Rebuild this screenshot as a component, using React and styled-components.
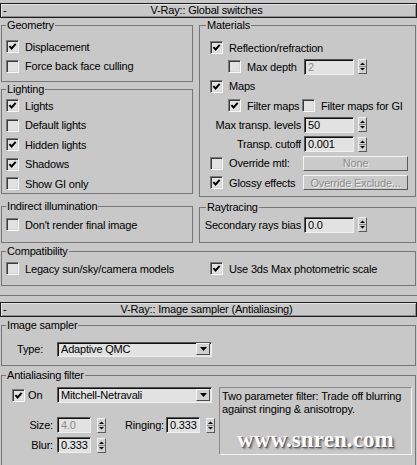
import React from "react"
import styled, { createGlobalStyle } from "styled-components"

const GlobalStyle = createGlobalStyle`
  html, body {
    margin: 0;
    padding: 0;
    background: #c8c8c8;
  }
  body {
    font-family: "Liberation Sans", Arial, sans-serif;
    font-size: 11px;
    letter-spacing: -0.18px;
    color: #000;
  }
`

const Panel = styled.div`
  width: 417px;
  height: 465px;
  overflow: hidden;
  background: #c8c8c8;
  padding-top: 3px;
  box-sizing: border-box;
`

const RolloutHeader = styled.div`
  height: 15px;
  box-sizing: border-box;
  border: 1px solid #1e1e1e;
  box-shadow: inset 1px 1px 0 #e4e4e4, inset -1px -1px 0 #8e8e8e;
  display: grid;
  grid-template-columns: 14px 1fr 18px;
  align-items: center;
  line-height: 13px;
`

const Minus = styled.span`
  padding-left: 2px;
`

const Title = styled.span`
  text-align: center;
  white-space: nowrap;
`

const Columns = styled.div`
  display: flex;
  gap: 6px;
  padding: 0 1px;
  margin-top: 1px;
`

const Column = styled.div`
  display: flex;
  flex-direction: column;
  width: ${p => p.$w}px;
`

const Wide = styled.div`
  padding: 0 1px;
  margin-top: ${p => p.$mt || 0}px;
`

const Group = styled.fieldset`
  margin: ${p => p.$mt || 0}px 0 0;
  padding: 0;
  border: 1px solid #767676;
  height: ${p => p.$h}px;
  box-sizing: border-box;
  min-width: 0;
`

const Legend = styled.legend`
  padding: 0 1px;
  margin-left: ${p => p.$ml ?? 4}px;
  line-height: 12px;
  font-size: 11px;
  white-space: nowrap;
`

const Content = styled.div`
  padding-top: ${p => p.$pt || 0}px;
  padding-left: ${p => p.$pl || 0}px;
  display: flex;
  flex-direction: ${p => (p.$row ? "row" : "column")};
`

const Row = styled.div`
  display: flex;
  align-items: center;
  height: ${p => p.$h || 19.5}px;
  padding-left: ${p => p.$indent || 0}px;
  margin-top: ${p => p.$mt || 0}px;
  white-space: nowrap;
`

const Cell = styled.div`
  display: flex;
  align-items: center;
  justify-content: ${p => (p.$right ? "flex-end" : "flex-start")};
  width: ${p => p.$w}px;
  flex: none;
  box-sizing: border-box;
  padding-left: ${p => p.$pl || 0}px;
  padding-right: ${p => p.$pr || 0}px;
  white-space: nowrap;
`

const Box = styled.span`
  width: 13px;
  height: 13px;
  flex: none;
  box-sizing: border-box;
  border: 1px solid;
  border-color: #7a7a7a #fafafa #fafafa #7a7a7a;
  box-shadow: inset 1px 1px 0 #3a3a3a, inset -1px -1px 0 #d6d6d6;
  background: #e2e2e2;
  display: flex;
  align-items: center;
  justify-content: center;
  margin-right: ${p => p.$gap ?? 6}px;
`

const Tick = () => (
  <svg width="9" height="9" viewBox="0 0 9 9">
    <path d="M1.4 4.1 L3.6 6.5 L7.7 1.9" fill="none" stroke="#000" strokeWidth="1.9" />
  </svg>
)

const Check = ({ on, gap, children }) => (
  <>
    <Box $gap={gap}>{on && <Tick />}</Box>
    {children}
  </>
)

const Field = styled.div`
  width: ${p => p.$w || 50}px;
  height: 16px;
  flex: none;
  box-sizing: border-box;
  border: 1px solid;
  border-color: #555 #efefef #efefef #555;
  box-shadow: inset 1px 1px 0 #111;
  background: #e2e2e2;
  color: ${p => (p.$off ? "#8c8c8c" : "#000")};
  padding-left: 3px;
  line-height: 14px;
`

const SpinBox = styled.div`
  width: 9px;
  height: 15px;
  flex: none;
  margin-left: ${p => p.$ml ?? 4}px;
  box-sizing: border-box;
  border: 1px solid;
  border-color: #f2f2f2 #5c5c5c #5c5c5c #f2f2f2;
  background: #d2d2d2;
  display: flex;
`

const Spinner = ({ ml }) => (
  <SpinBox $ml={ml}>
    <svg width="7" height="13" viewBox="0 0 7 13">
      <path d="M1 5 L3.5 2.5 L6 5 Z" fill="#000" />
      <path d="M0 6.5 H7" stroke="#8a8a8a" strokeWidth="1" />
      <path d="M1 8 L3.5 10.5 L6 8 Z" fill="#000" />
    </svg>
  </SpinBox>
)

const Button = styled.div`
  width: 105px;
  height: 15px;
  flex: none;
  box-sizing: border-box;
  border: 1px solid;
  border-color: #f4f4f4 #5a5a5a #5a5a5a #f4f4f4;
  background: #cacaca;
  color: #8c8c8c;
  text-shadow: 1px 1px 0 #eeeeee;
  display: flex;
  align-items: center;
  justify-content: center;
`

const Select = styled.div`
  width: ${p => p.$w}px;
  height: ${p => p.$h || 16}px;
  flex: none;
  box-sizing: border-box;
  border: 1px solid;
  border-color: #555 #efefef #efefef #555;
  box-shadow: inset 1px 1px 0 #111;
  background: #e2e2e2;
  display: flex;
  align-items: center;
  padding-left: 3px;
`

const SelectText = styled.span`
  flex: 1;
`

const SelectButton = styled.span`
  width: 14px;
  height: 12px;
  margin-right: 1px;
  box-sizing: border-box;
  border: 1px solid;
  border-color: #f4f4f4 #4a4a4a #4a4a4a #f4f4f4;
  background: #d0d0d0;
  display: flex;
  align-items: center;
  justify-content: center;
`

const Dropdown = ({ w, h, children }) => (
  <Select $w={w} $h={h}>
    <SelectText>{children}</SelectText>
    <SelectButton>
      <svg width="7" height="4" viewBox="0 0 7 4">
        <path d="M0 0 H7 L3.5 4 Z" fill="#000" />
      </svg>
    </SelectButton>
  </Select>
)

const Separator = styled.div`
  margin-top: 9px;
  height: 6px;
  border-top: 1px solid #767676;
`

const FilterLeft = styled.div`
  width: 217px;
  flex: none;
  padding-top: 4px;
`

const Description = styled.div`
  width: 193px;
  height: 68px;
  margin-top: 6px;
  box-sizing: border-box;
  border: 1px solid;
  border-color: #8a8a8a #f4f4f4 #f4f4f4 #8a8a8a;
  padding: 2px 2px 4px;
  line-height: 13px;
  display: flex;
  flex-direction: column;
`

const Watermark = styled.div`
  margin-top: auto;
  text-align: center;
  font-family: "Liberation Serif", "Times New Roman", serif;
  font-weight: bold;
  font-size: 23px;
  line-height: 20px;
  letter-spacing: 0.1px;
  color: #fbfbfb;
  text-shadow: 1px 1px 0 #5e5e5e, 2px 2px 2px #7a7a7a;
`

export default function App() {
  return (
    <>
      <GlobalStyle />
      <Panel>
        <RolloutHeader>
          <Minus>-</Minus>
          <Title>V-Ray:: Global switches</Title>
          <span />
        </RolloutHeader>

        <Columns>
          <Column $w={192}>
            <Group $h={63}>
              <Legend>Geometry</Legend>
              <Content $pt={6} $pl={4}>
                <Row><Check on>Displacement</Check></Row>
                <Row><Check>Force back face culling</Check></Row>
              </Content>
            </Group>
            <Group $h={111} $mt={1}>
              <Legend>Lighting</Legend>
              <Content $pt={1} $pl={4}>
                <Row><Check on>Lights</Check></Row>
                <Row><Check>Default lights</Check></Row>
                <Row><Check on>Hidden lights</Check></Row>
                <Row><Check on>Shadows</Check></Row>
                <Row><Check>Show GI only</Check></Row>
              </Content>
            </Group>
            <Group $h={43} $mt={6}>
              <Legend>Indirect illumination</Legend>
              <Content $pt={3} $pl={4}>
                <Row><Check>Don't render final image</Check></Row>
              </Content>
            </Group>
          </Column>

          <Column $w={217}>
            <Group $h={178}>
              <Legend $ml={6}>Materials</Legend>
              <Content $pt={7}>
                <Row $h={19.3} $indent={10}><Check on>Reflection/refraction</Check></Row>
                <Row $h={19.3}>
                  <Cell $w={104} $pl={28}><Check>Max depth</Check></Cell>
                  <Field $off>2</Field>
                  <Spinner />
                </Row>
                <Row $h={19.3} $indent={10}><Check on>Maps</Check></Row>
                <Row $h={19.3}>
                  <Cell $w={102} $pl={28}><Check on>Filter maps</Check></Cell>
                  <Check>Filter maps for GI</Check>
                </Row>
                <Row $h={19.3}>
                  <Cell $w={104} $pr={3} $right>Max transp. levels</Cell>
                  <Field>50</Field>
                  <Spinner />
                </Row>
                <Row $h={19.3}>
                  <Cell $w={104} $pr={3} $right>Transp. cutoff</Cell>
                  <Field>0.001</Field>
                  <Spinner />
                </Row>
                <Row $h={19.3}>
                  <Cell $w={103} $pl={10}><Check>Override mtl:</Check></Cell>
                  <Button>None</Button>
                </Row>
                <Row $h={19.3}>
                  <Cell $w={103} $pl={10}><Check on>Glossy effects</Check></Cell>
                  <Button>Override Exclude...</Button>
                </Row>
              </Content>
            </Group>
            <Group $h={42} $mt={4}>
              <Legend $ml={6}>Raytracing</Legend>
              <Content $pt={2}>
                <Row $h={19}>
                  <Cell $w={104} $pr={3} $right>Secondary rays bias</Cell>
                  <Field>0.0</Field>
                  <Spinner />
                </Row>
              </Content>
            </Group>
          </Column>
        </Columns>

        <Wide $mt={2}>
          <Group $h={41}>
            <Legend>Compatibility</Legend>
            <Content $pt={2}>
              <Row>
                <Cell $w={208} $pl={4}><Check>Legacy sun/sky/camera models</Check></Cell>
                <Check on>Use 3ds Max photometric scale</Check>
              </Row>
            </Content>
          </Group>
        </Wide>

        <Separator />

        <RolloutHeader>
          <Minus>-</Minus>
          <Title>V-Ray:: Image sampler (Antialiasing)</Title>
          <span />
        </RolloutHeader>

        <Wide $mt={2}>
          <Group $h={47}>
            <Legend>Image sampler</Legend>
            <Content $pt={8}>
              <Row $h={20}>
                <Cell $w={55} $pl={15}>Type:</Cell>
                <Dropdown w={155} h={15}>Adaptive QMC</Dropdown>
              </Row>
            </Content>
          </Group>
        </Wide>

        <Wide $mt={3}>
          <Group $h={110}>
            <Legend>Antialiasing filter</Legend>
            <Content $row>
              <FilterLeft>
                <Row $h={20}>
                  <Cell $w={55} $pl={10}><Check on gap={3}>On</Check></Cell>
                  <Dropdown w={155}>Mitchell-Netravali</Dropdown>
                </Row>
                <Row $h={20} $mt={10}>
                  <Cell $w={55} $pr={4} $right>Size:</Cell>
                  <Field $w={34} $off>4.0</Field>
                  <Spinner ml={6} />
                  <Cell $w={60} $pr={2} $right>Ringing:</Cell>
                  <Field $w={34}>0.333</Field>
                  <Spinner ml={6} />
                </Row>
                <Row $h={20}>
                  <Cell $w={55} $pr={4} $right>Blur:</Cell>
                  <Field $w={34}>0.333</Field>
                  <Spinner ml={6} />
                </Row>
              </FilterLeft>
              <Description>
                <div>Two parameter filter: Trade off blurring against ringing &amp; anisotropy.</div>
                <Watermark>www.snren.com</Watermark>
              </Description>
            </Content>
          </Group>
        </Wide>
      </Panel>
    </>
  )
}
